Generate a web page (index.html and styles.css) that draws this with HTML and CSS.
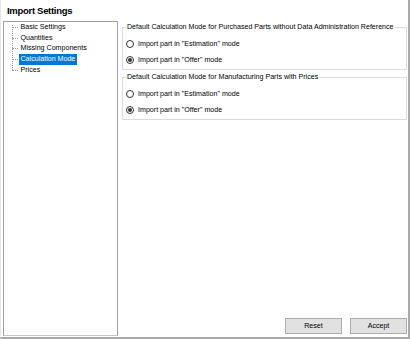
FILE: index.html
```html
<!DOCTYPE html>
<html lang="en">
<head>
  <meta charset="UTF-8">
  <title>Import Settings</title>
  <link rel="stylesheet" href="styles.css">
</head>
<body>
  <div class="dialog">
    <div class="title">Import Settings</div>
    <div class="main">
      <div class="treebox">
        <ul class="tree">
          <li><span>Basic Settings</span></li>
          <li><span>Quantities</span></li>
          <li><span>Missing Components</span></li>
          <li class="selected"><span>Calculation Mode</span></li>
          <li><span>Prices</span></li>
        </ul>
      </div>
      <div class="content">
        <fieldset class="group">
          <legend>Default Calculation Mode for Purchased Parts without Data Administration Reference</legend>
          <label class="radio"><span class="dot"></span>Import part in "Estimation" mode</label>
          <label class="radio checked"><span class="dot"></span>Import part in "Offer" mode</label>
        </fieldset>
        <fieldset class="group">
          <legend>Default Calculation Mode for Manufacturing Parts with Prices</legend>
          <label class="radio"><span class="dot"></span>Import part in "Estimation" mode</label>
          <label class="radio checked"><span class="dot"></span>Import part in "Offer" mode</label>
        </fieldset>
        <div class="buttons">
          <button class="btn">Reset</button>
          <button class="btn">Accept</button>
        </div>
      </div>
    </div>
  </div>
</body>
</html>
```

FILE: styles.css
```css
body{margin:0; font-family:"Liberation Sans", Arial, sans-serif; font-size:7.1px; color:#000; background:#fff;}
.dialog{width:410px; height:339px; box-sizing:border-box; border-left:1px solid #e6e6e6; border-right:2px solid #a9a9a9; border-bottom:2px solid #a9a9a9; display:flex; flex-direction:column;}
.title{height:21px; line-height:21px; padding-left:6px; font-size:9.5px; font-weight:bold; letter-spacing:-0.3px;}
.main{flex:1; display:flex; padding-bottom:1px;}

/* tree */
.treebox{width:115px; margin-left:2px; box-sizing:border-box; border:1px solid #a0a0a0; border-bottom-color:#c8c8c8;}
.tree{position:relative; margin:0; padding:0 0 0 8px; list-style:none;}
.tree::before{content:""; position:absolute; left:8px; top:3px; bottom:5px; border-left:1px dotted #a0a0a0;}
.tree li{position:relative; height:10.7px; line-height:10.7px; padding-left:7px; white-space:nowrap;}
.tree li::before{content:""; position:absolute; left:0; top:5px; width:6px; border-top:1px dotted #a0a0a0;}
.tree span{display:inline-block; padding:0 1.5px; line-height:10.7px;}
.tree .selected span{background:#0078d7; color:#fff;}

/* right side */
.content{flex:1; display:flex; flex-direction:column; padding:0 1px 0 4px;}
.group{margin:2px 0 0; padding:4px 0 1px 3px; border:1px solid #dcdcdc; min-width:0;}
.group + .group{margin-top:3px;}
.group legend{padding:0 1px; line-height:9px;}
.radio{display:flex; align-items:center; height:16px;}
.dot{position:relative; width:8px; height:8px; box-sizing:border-box; border:1px solid #333; border-radius:50%; margin-right:4px; background:#fff;}
.checked .dot::after{content:""; position:absolute; left:1px; top:1px; width:4px; height:4px; border-radius:50%; background:#333;}

.buttons{margin-top:auto; display:flex; justify-content:flex-end; gap:8px; padding-bottom:2px;}
.btn{width:57px; height:16px; padding:0; border:1px solid #adadad; background:#e1e1e1; font-family:inherit; font-size:7.1px; color:#000;}
```
